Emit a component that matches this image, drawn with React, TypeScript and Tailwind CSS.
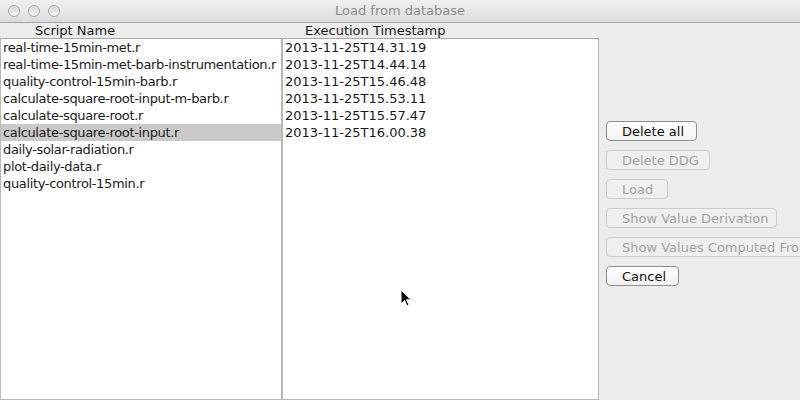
import { useState } from "react";

const scripts = [
  "real-time-15min-met.r",
  "real-time-15min-met-barb-instrumentation.r",
  "quality-control-15min-barb.r",
  "calculate-square-root-input-m-barb.r",
  "calculate-square-root.r",
  "calculate-square-root-input.r",
  "daily-solar-radiation.r",
  "plot-daily-data.r",
  "quality-control-15min.r",
];

const timestamps = [
  "2013-11-25T14.31.19",
  "2013-11-25T14.44.14",
  "2013-11-25T15.46.48",
  "2013-11-25T15.53.11",
  "2013-11-25T15.57.47",
  "2013-11-25T16.00.38",
];

const buttons = [
  { label: "Delete all", width: "w-[91px]", enabled: true },
  { label: "Delete DDG", width: "w-[104px]", enabled: false },
  { label: "Load", width: "w-[62px]", enabled: false },
  { label: "Show Value Derivation", width: "w-[171px]", enabled: false },
  { label: "Show Values Computed From", width: "w-[210px]", enabled: false },
  { label: "Cancel", width: "w-[73px]", enabled: true },
];

const TrafficLight = () => (
  <span className="h-[12px] w-[12px] rounded-full border border-[#a9a9a9] bg-gradient-to-b from-[#d8d8d8] to-[#f4f4f4]" />
);

const App = () => {
  const [selected, setSelected] = useState(5);

  return (
    <div className="relative h-[400px] w-[800px] overflow-hidden bg-[#ececec] font-['DejaVu_Sans',sans-serif] text-[13px] text-[#1a1a1a]">
      {/* title bar */}
      <div className="relative flex h-[23px] items-center border-b border-[#a3a3a3] bg-gradient-to-b from-[#f0f0f0] to-[#dcdcdc]">
        <div className="flex gap-[8px] pl-[8px]">
          <TrafficLight />
          <TrafficLight />
          <TrafficLight />
        </div>
        <div className="absolute inset-0 flex items-center justify-center text-[13px] text-[#8c8c8c]">
          Load from database
        </div>
      </div>

      <div className="flex">
        {/* tables */}
        <div className="flex flex-col">
          <div className="flex h-[15px] items-center leading-none">
            <div className="w-[282px] pl-[35px]">Script Name</div>
            <div className="w-[317px] pl-[23px]">Execution Timestamp</div>
          </div>
          <div className="flex h-[362px] border-t border-[#a8a8a8]">
            <div className="w-[282px] overflow-hidden border-x border-b border-[#b8b8b8] bg-white tracking-[-0.35px]">
              {scripts.map((name, i) => (
                <div
                  key={name}
                  onClick={() => setSelected(i)}
                  className={
                    i === selected
                      ? "flex h-[17px] items-center whitespace-nowrap bg-[#cacaca] pl-[2px] leading-none"
                      : "flex h-[17px] items-center whitespace-nowrap pl-[2px] leading-none"
                  }
                >
                  {name}
                </div>
              ))}
            </div>
            <div className="w-[317px] border-r border-b border-l border-[#b8b8b8] bg-white pl-[2px]">
              {timestamps.map((ts) => (
                <div key={ts} className="flex h-[17px] items-center leading-none">
                  {ts}
                </div>
              ))}
            </div>
          </div>
        </div>

        {/* buttons */}
        <div className="flex min-w-0 flex-1 flex-col gap-[9px] overflow-hidden pl-[7px] pt-[98px]">
          {buttons.map((b) => (
            <button
              key={b.label}
              className={
                b.enabled
                  ? `${b.width} flex h-[20px] shrink-0 items-center whitespace-nowrap rounded-[4px] border border-[#8e8e8e] bg-gradient-to-b from-white to-[#f1f1f1] pl-[15px] text-[13px] leading-none text-[#111]`
                  : `${b.width} flex h-[20px] shrink-0 items-center whitespace-nowrap rounded-[4px] border border-[#cdcdcd] bg-[#efefef] pl-[15px] text-[13px] leading-none text-[#a3a3a3]`
              }
            >
              {b.label}
            </button>
          ))}
        </div>
      </div>

      {/* mouse pointer */}
      <svg
        className="absolute left-[400px] top-[289px]"
        width="13"
        height="19"
        viewBox="0 0 13 19"
      >
        <path
          d="M1 1 L1 15 L4.5 11.5 L7 17 L9 16 L6.5 10.8 L11 10.8 Z"
          fill="#000"
          stroke="#fff"
          strokeWidth="1"
        />
      </svg>
    </div>
  );
};

export default App;
